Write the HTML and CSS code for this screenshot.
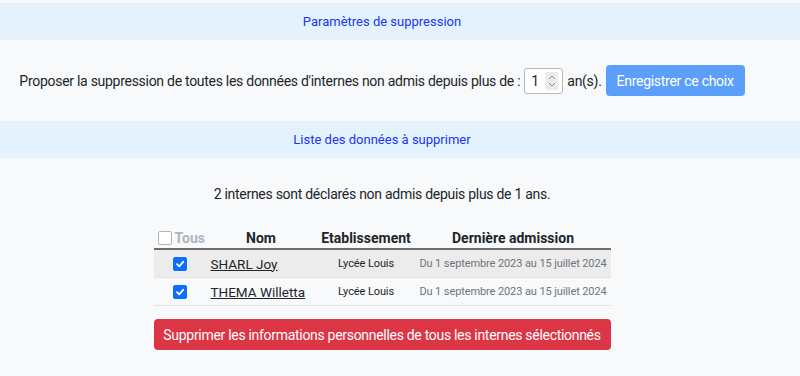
FILE: index.html
```html
<!DOCTYPE html>
<html>
<head>
    <title>Suppression des données</title>
    <link rel="stylesheet" href="styles.css">
</head>
<body>
    <div class="bandeau">Paramètres de suppression</div>

    <div class="section parametres">
        <span>Proposer la suppression de toutes les données d'internes non admis depuis plus de :</span>
        <span class="nombre">
            <span class="valeur">1</span>
            <span class="fleches">
                <svg width="8" height="14" viewBox="0 0 8 14"><path d="M1 5 L4 2 L7 5 M1 9 L4 12 L7 9" fill="none" stroke="#8a8a8a" stroke-width="1"/></svg>
            </span>
        </span>
        <span>an(s).</span>
        <button class="btn-enregistrer">Enregistrer ce choix</button>
    </div>

    <div class="bandeau">Liste des données à supprimer</div>

    <div class="section liste">
        <p class="resume">2 internes sont déclarés non admis depuis plus de 1 ans.</p>

        <table class="tableau">
            <thead>
                <tr>
                    <th class="col-tous"><span class="case"></span> Tous</th>
                    <th class="col-nom">Nom</th>
                    <th class="col-etab">Etablissement</th>
                    <th class="col-date">Dernière admission</th>
                </tr>
            </thead>
            <tbody>
                <tr class="ligne-grise">
                    <td class="col-tous"><span class="case cochee"><svg width="12" height="12" viewBox="0 0 12 12"><path d="M3 6.2 L5.2 8.4 L9.2 3.8" fill="none" stroke="#fff" stroke-width="1.8" stroke-linecap="round" stroke-linejoin="round"/></svg></span></td>
                    <td class="col-nom"><a href="#">SHARL Joy</a></td>
                    <td class="col-etab">Lycée Louis</td>
                    <td class="col-date">Du 1 septembre 2023 au 15 juillet 2024</td>
                </tr>
                <tr>
                    <td class="col-tous"><span class="case cochee"><svg width="12" height="12" viewBox="0 0 12 12"><path d="M3 6.2 L5.2 8.4 L9.2 3.8" fill="none" stroke="#fff" stroke-width="1.8" stroke-linecap="round" stroke-linejoin="round"/></svg></span></td>
                    <td class="col-nom"><a href="#">THEMA Willetta</a></td>
                    <td class="col-etab">Lycée Louis</td>
                    <td class="col-date">Du 1 septembre 2023 au 15 juillet 2024</td>
                </tr>
            </tbody>
        </table>

        <button class="btn-supprimer">Supprimer les informations personnelles de tous les internes sélectionnés</button>
    </div>
</body>
</html>
```

FILE: styles.css
```css
body {
    margin: 0;
    padding-top: 3px;
    background-color: #f8f9fa;
    font-family: Roboto, "Liberation Sans", sans-serif;
    font-size: 14px;
    letter-spacing: -0.28px;
    color: #212529;
}
.bandeau {
    background-color: #e3f2fd;
    height: 37px;
    line-height: 37px;
    padding-right: 36px;
    text-align: center;
    color: #2134f2;
    font-size: 13px;
    letter-spacing: 0;
}
.section {
    text-align: center;
    padding-right: 36px;
}
.parametres {
    height: 81px;
    display: flex;
    align-items: center;
    justify-content: center;
    gap: 4px;
}
.nombre {
    display: inline-flex;
    align-items: center;
    justify-content: space-between;
    width: 39px;
    height: 26px;
    padding: 0 4px 0 6px;
    box-sizing: border-box;
    background-color: #fff;
    border: 1px solid #b8b8b8;
    border-radius: 3px;
}
.fleches {
    display: flex;
    align-items: center;
    justify-content: center;
    width: 13px;
    height: 18px;
    background-color: #ececec;
}
.btn-enregistrer {
    background-color: #5c9ffa;
    color: white;
    border: none;
    height: 31px;
    padding: 0 11px;
    border-radius: 4px;
    font-family: inherit;
    font-size: 14px;
    letter-spacing: -0.28px;
}
.liste {
    padding-top: 1px;
}
.resume {
    margin: 27px 0 25px;
}
.tableau {
    width: 457px;
    margin: 0 auto;
    border-collapse: collapse;
    white-space: nowrap;
    letter-spacing: 0;
}
.tableau th {
    font-weight: bold;
    font-size: 14px;
    height: 21px;
    padding: 0;
    border-bottom: 2px solid #6c6c6c;
}
.tableau td {
    height: 27px;
    padding: 0;
    border-bottom: 1px solid #e2e3e5;
    font-size: 11px;
    letter-spacing: -0.1px;
}
.ligne-grise td {
    background-color: #ececec;
}
.tableau th.col-tous {
    color: #adb5bd;
    text-align: left;
    padding-left: 4px;
}
.col-tous {
    width: 48px;
}
.col-nom {
    width: 106px;
}
.tableau td.col-nom {
    text-align: left;
    padding-left: 5px;
}
.col-etab {
    width: 99px;
}
.tableau td.col-date {
    color: #6c757d;
}
.case {
    display: inline-flex;
    align-items: center;
    justify-content: center;
    width: 12px;
    height: 12px;
    border: 1px solid #b0b5ba;
    border-radius: 2px;
    background-color: #fff;
    vertical-align: -2px;
}
.case.cochee {
    background-color: #0d6efd;
    border-color: #0d6efd;
}
.tableau a {
    color: #212529;
    font-size: 13.5px;
    letter-spacing: 0;
}
.btn-supprimer {
    display: block;
    width: 457px;
    height: 31px;
    margin: 13px auto 0;
    background-color: #dc3545;
    color: white;
    border: none;
    border-radius: 4px;
    font-family: inherit;
    font-size: 14px;
    letter-spacing: -0.3px;
    white-space: nowrap;
}
```
